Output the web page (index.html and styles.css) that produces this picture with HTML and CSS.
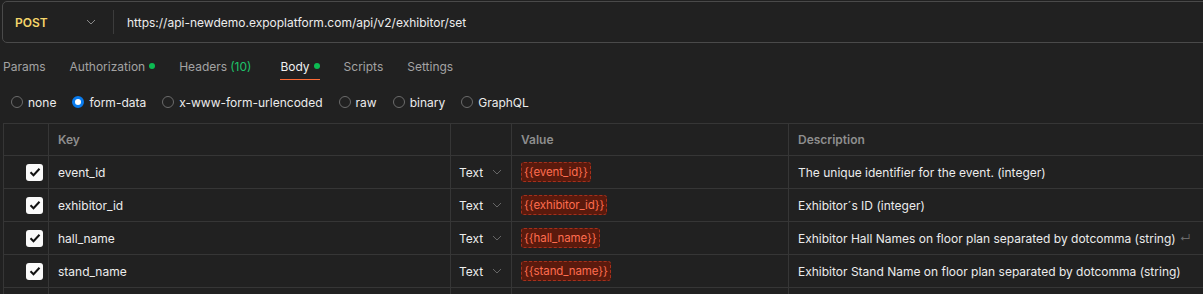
FILE: index.html
```html
<!DOCTYPE html>
<html lang="en">
<head>
    <meta charset="UTF-8">
    <title>POST exhibitor/set</title>
    <link rel="stylesheet" href="styles.css">
</head>
<body>
    <div class="request-bar">
        <div class="method">
            <span class="method-name">POST</span>
            <svg class="chevron" width="10" height="6" viewBox="0 0 10 6"><path d="M1 1l4 4 4-4" fill="none" stroke="#8a8a8a" stroke-width="1"/></svg>
        </div>
        <div class="url">https://api-newdemo.expoplatform.com/api/v2/exhibitor/set</div>
    </div>

    <div class="tabs">
        <span class="tab">Params</span>
        <span class="tab">Authorization <i class="dot"></i></span>
        <span class="tab headers">Headers <span class="count">(10)</span></span>
        <span class="tab active">Body <i class="dot"></i></span>
        <span class="tab">Scripts</span>
        <span class="tab">Settings</span>
    </div>

    <div class="body-types">
        <label class="radio"><span class="circle"></span>none</label>
        <label class="radio"><span class="circle checked"></span>form-data</label>
        <label class="radio"><span class="circle"></span>x-www-form-urlencoded</label>
        <label class="radio"><span class="circle"></span>raw</label>
        <label class="radio"><span class="circle"></span>binary</label>
        <label class="radio"><span class="circle"></span>GraphQL</label>
    </div>

    <div class="table">
        <div class="row head">
            <div class="cell"></div>
            <div class="cell key">Key</div>
            <div class="cell"></div>
            <div class="cell">Value</div>
            <div class="cell">Description</div>
        </div>
        <div class="row">
            <div class="cell check"><span class="box"><svg width="12" height="10" viewBox="0 0 12 10"><path d="M1.5 5.2l3 3 6-6.5" fill="none" stroke="#111" stroke-width="2"/></svg></span></div>
            <div class="cell key">event_id</div>
            <div class="cell type">Text <svg class="chevron" width="10" height="6" viewBox="0 0 10 6"><path d="M1 1l4 4 4-4" fill="none" stroke="#666" stroke-width="1"/></svg></div>
            <div class="cell"><span class="var">{{event_id}}</span></div>
            <div class="cell desc">The unique identifier for the event. (integer)</div>
        </div>
        <div class="row">
            <div class="cell check"><span class="box"><svg width="12" height="10" viewBox="0 0 12 10"><path d="M1.5 5.2l3 3 6-6.5" fill="none" stroke="#111" stroke-width="2"/></svg></span></div>
            <div class="cell key">exhibitor_id</div>
            <div class="cell type">Text <svg class="chevron" width="10" height="6" viewBox="0 0 10 6"><path d="M1 1l4 4 4-4" fill="none" stroke="#666" stroke-width="1"/></svg></div>
            <div class="cell"><span class="var">{{exhibitor_id}}</span></div>
            <div class="cell desc">Exhibitor´s ID (integer)</div>
        </div>
        <div class="row">
            <div class="cell check"><span class="box"><svg width="12" height="10" viewBox="0 0 12 10"><path d="M1.5 5.2l3 3 6-6.5" fill="none" stroke="#111" stroke-width="2"/></svg></span></div>
            <div class="cell key">hall_name</div>
            <div class="cell type">Text <svg class="chevron" width="10" height="6" viewBox="0 0 10 6"><path d="M1 1l4 4 4-4" fill="none" stroke="#666" stroke-width="1"/></svg></div>
            <div class="cell"><span class="var">{{hall_name}}</span></div>
            <div class="cell desc">Exhibitor Hall Names on floor plan separated by dotcomma (string) <span class="return">↵</span></div>
        </div>
        <div class="row">
            <div class="cell check"><span class="box"><svg width="12" height="10" viewBox="0 0 12 10"><path d="M1.5 5.2l3 3 6-6.5" fill="none" stroke="#111" stroke-width="2"/></svg></span></div>
            <div class="cell key">stand_name</div>
            <div class="cell type">Text <svg class="chevron" width="10" height="6" viewBox="0 0 10 6"><path d="M1 1l4 4 4-4" fill="none" stroke="#666" stroke-width="1"/></svg></div>
            <div class="cell"><span class="var">{{stand_name}}</span></div>
            <div class="cell desc">Exhibitor Stand Name on floor plan separated by dotcomma (string)</div>
        </div>
        <div class="row last">
            <div class="cell"></div>
            <div class="cell"></div>
            <div class="cell"></div>
            <div class="cell"></div>
            <div class="cell"></div>
        </div>
    </div>
</body>
</html>
```

FILE: styles.css
```css
* {
    box-sizing: border-box;
}
body {
    margin: 0;
    background: #212121;
    color: #e6e6e6;
    font-family: Inter, "Noto Sans", sans-serif;
    font-size: 12px;
    overflow: hidden;
    width: 1203px;
    height: 294px;
}
.request-bar {
    display: flex;
    align-items: center;
    height: 42px;
    margin: 1px -6px 0 2px;
    border: 1px solid #4a4a4a;
    border-radius: 5px;
    background: #212121;
}
.method {
    display: flex;
    align-items: center;
    justify-content: space-between;
    width: 111px;
    height: 24px;
    padding: 0 17px 0 12px;
    border-right: 1px solid #3c3c3c;
}
.method-name {
    color: #f5d56a;
    font-weight: 600;
}
.url {
    padding-left: 13px;
    color: #ededed;
}
.tabs {
    display: flex;
    gap: 24px;
    margin: 0 0 0 3px;
    height: 40px;
    align-items: center;
}
.tab {
    position: relative;
    color: #a3a3a3;
    display: flex;
    align-items: center;
    gap: 4px;
    margin-top: 6px;
}
.tab.headers {
    margin-right: 5px;
}
.tab.active {
    color: #f0f0f0;
}
.tab.active::after {
    content: "";
    position: absolute;
    left: 0;
    right: 0;
    bottom: -6px;
    height: 1px;
    background: #ff6c37;
}
.dot {
    display: inline-block;
    width: 6px;
    height: 6px;
    border-radius: 50%;
    background: #0cbb52;
}
.count {
    color: #1ec26a;
    margin-left: -1px;
}
.body-types {
    display: flex;
    gap: 16px;
    margin: -1px 0 0 11px;
    height: 40px;
    align-items: center;
}
.radio {
    display: flex;
    align-items: center;
    gap: 5px;
    color: #ececec;
}
.circle {
    width: 12px;
    height: 12px;
    border: 1px solid #6b6b6b;
    border-radius: 50%;
}
.circle.checked {
    border: 3px solid #097bed;
    background: #fff;
}
.table {
    margin: 1px 0 0 3px;
    border-top: 1px solid #363636;
    border-left: 1px solid #363636;
}
.row {
    display: grid;
    grid-template-columns: 45px 402px 61px 277px 1fr;
    height: 33px;
    border-bottom: 1px solid #363636;
}
.row.head {
    height: 32px;
    color: #8e8e8e;
    font-weight: 600;
}
.cell {
    display: flex;
    align-items: center;
    padding-left: 9px;
    border-right: 1px solid #363636;
    white-space: nowrap;
    overflow: hidden;
}
.cell:last-child {
    border-right: none;
}
.cell.check {
    justify-content: flex-end;
    padding: 0 5px 0 0;
}
.box {
    display: flex;
    align-items: center;
    justify-content: center;
    width: 17px;
    height: 17px;
    border-radius: 3px;
    background: #fafafa;
}
.cell.key {
    color: #ededed;
}
.row.head .cell.key {
    color: #8e8e8e;
}
.cell.type {
    padding-left: 8px;
    gap: 9px;
    color: #ededed;
}
.var {
    padding: 2px 2px;
    border: 1px dashed #a5301c;
    border-radius: 3px;
    background: #5a1a0d;
    color: #ff6d4f;
    font-size: 11.5px;
    letter-spacing: -0.1px;
}
.desc {
    color: #ececec;
}
.return {
    color: #6a6a6a;
    font-size: 11px;
    margin-left: 4px;
}
```
